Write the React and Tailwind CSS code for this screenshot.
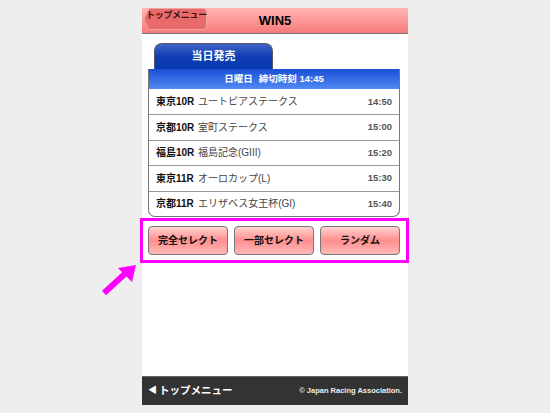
const races = [
  { place: '東京10R', name: 'ユートピアステークス', time: '14:50' },
  { place: '京都10R', name: '室町ステークス', time: '15:00' },
  { place: '福島10R', name: '福島記念(GIII)', time: '15:20' },
  { place: '東京11R', name: 'オーロカップ(L)', time: '15:30' },
  { place: '京都11R', name: 'エリザベス女王杯(GI)', time: '15:40' },
];

const buttons = ['完全セレクト', '一部セレクト', 'ランダム'];

const font = { fontFamily: '"Liberation Sans", "Noto Sans CJK JP", sans-serif' };

export default function App() {
  return (
    <div className="relative h-[413px] w-[550px] overflow-hidden bg-[#eeeeee]" style={font}>
      <div className="ml-[142px] mt-[8px] flex h-[397px] w-[266px] flex-col bg-white">
        {/* header */}
        <div className="relative flex h-[26px] items-center justify-center border-b border-[#777] bg-gradient-to-b from-[#ffb4b4] to-[#f47a7a]">
          <div className="absolute left-[2px] top-[0px] h-[22px] w-[63px] rounded-[4px] border border-[#f2a0a0] bg-[#e86a6a] [clip-path:polygon(6px_0,100%_0,100%_100%,6px_100%,0_50%)]" />
          <span className="absolute left-[4px] top-[1px] text-[9px] font-bold leading-[12px] tracking-[-0.3px] text-[#3a1010]">トップメニュー</span>
          <span className="text-[13px] font-bold text-black">WIN5</span>
        </div>

        {/* tab */}
        <div className="ml-[12px] mt-[9px] flex h-[26px] w-[119px] items-center justify-center rounded-t-[8px] border border-b-0 border-[#556] bg-gradient-to-b from-[#3f63c8] via-[#0d3db0] to-[#0838b0] text-[11px] font-bold text-white">
          当日発売
        </div>

        {/* race table */}
        <div className="ml-[6px] w-[252px] overflow-hidden rounded-b-[7px] border border-t-0 border-[#777]">
          <div className="flex h-[20px] items-center justify-center gap-[6px] bg-gradient-to-b from-[#1a4ed6] to-[#5289f2] text-[9.5px] font-bold text-white">
            <span>日曜日</span>
            <span>締切時刻 14:45</span>
          </div>
          {races.map((r, i) => (
            <div
              key={r.place}
              className={`flex h-[25.4px] items-center px-[7px] text-[10px] ${i > 0 ? 'border-t border-[#999]' : ''}`}
            >
              <span className="w-[42px] font-bold text-[#111]">{r.place}</span>
              <span className="flex-1 text-[#444]">{r.name}</span>
              <span className="text-[9.5px] font-bold text-[#555]">{r.time}</span>
            </div>
          ))}
        </div>

        {/* buttons */}
        <div className="-ml-[2px] mt-[1px] flex h-[45px] w-[269px] gap-[6px] border-[3px] border-[#ff00ff] pl-[5px] pt-[5px]">
          {buttons.map((b) => (
            <div
              key={b}
              className="flex h-[29px] w-[80px] items-center justify-center rounded-[4px] border border-[#777] bg-gradient-to-b from-[#ffd0d0] via-[#ff8e8e] to-[#ffb8b8] text-[10px] font-bold text-[#111]"
            >
              {b}
            </div>
          ))}
        </div>

        <div className="flex-1" />

        {/* footer */}
        <div className="flex h-[29px] items-center justify-between border-t border-[#666] bg-[#333] px-[6px]">
          <span className="flex items-center text-[10.5px] font-bold text-white">
            <span className="mr-[2px] text-[9px]">◀</span>トップメニュー
          </span>
          <span className="text-[7.5px] font-bold text-[#eee]">© Japan Racing Association.</span>
        </div>
      </div>

      {/* annotation arrow */}
      <svg className="absolute left-[100px] top-[262px]" width="40" height="36" viewBox="0 0 40 36">
        <line x1="4" y1="31" x2="28" y2="9" stroke="#ff00ff" strokeWidth="6" />
        <polygon points="36,3 18,6 32,20" fill="#ff00ff" />
      </svg>
    </div>
  );
}
